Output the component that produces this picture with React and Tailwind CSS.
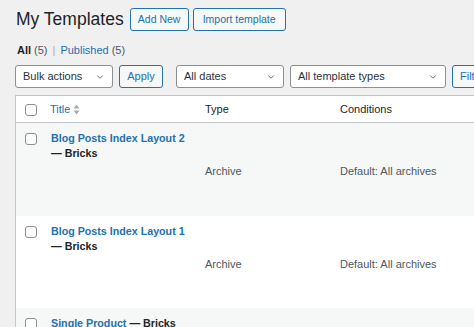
import { ChevronDown } from "lucide-react";

const rows = [
  { title: "Blog Posts Index Layout 2", bricksBelow: true, type: "Archive", cond: "Default: All archives", bg: "bg-[#f6f7f7]", h: "h-[93px]" },
  { title: "Blog Posts Index Layout 1", bricksBelow: true, type: "Archive", cond: "Default: All archives", bg: "bg-white", h: "h-[92px]" },
  { title: "Single Product", bricksBelow: false, type: "Single", cond: "Default: All products", bg: "bg-[#f6f7f7]", h: "h-[92px]" },
];

function Checkbox() {
  return <div className="w-[12px] h-[12px] rounded-[3px] border border-[#8c8f94] bg-white" />;
}

function Select({ label, width }) {
  return (
    <div className={`relative shrink-0 h-[23px] ${width} flex items-center bg-white border border-[#8c8f94] rounded-[3px] pl-[7px] text-[11px] text-[#2c3338]`}>
      {label}
      <ChevronDown size={10} strokeWidth={2} className="absolute right-[7px] top-1/2 -translate-y-1/2 text-[#50575e]" />
    </div>
  );
}

function SortIcon() {
  return (
    <svg width="7" height="11" viewBox="0 0 7 11" className="ml-[3px]">
      <path d="M3.5 0.5 L6.5 4.5 H0.5 Z" fill="#a7aaad" />
      <path d="M3.5 10.5 L6.5 6.5 H0.5 Z" fill="#a7aaad" />
    </svg>
  );
}

export default function App() {
  return (
    <div className="w-[474px] h-[327px] overflow-hidden bg-[#f0f0f1] font-['Liberation_Sans',Arial,sans-serif] text-[#1d2327]">
      {/* Heading */}
      <div className="flex items-center pl-[16px] pt-[8px] h-[31px]">
        <h1 className="text-[17.5px] leading-none text-[#1d2327] mr-[6px] whitespace-nowrap">My Templates</h1>
        <button className="shrink-0 h-[23px] w-[59px] border border-[#2271b1] rounded-[3px] bg-[#f6f7f7] text-[#2271b1] text-[10.5px] whitespace-nowrap">
          Add New
        </button>
        <button className="shrink-0 ml-[4px] h-[23px] w-[93px] border border-[#2271b1] rounded-[3px] bg-[#f6f7f7] text-[#2271b1] text-[10.5px] whitespace-nowrap">
          Import template
        </button>
      </div>

      {/* Status links */}
      <div className="pl-[17px] mt-[13px] h-[12px] flex items-center text-[11px] text-[#50575e] whitespace-nowrap">
        <span className="font-bold text-[#1d2327]">All</span>
        <span className="ml-[3px]">(5)</span>
        <span className="mx-[5px] text-[#a7aaad]">|</span>
        <span className="text-[#2271b1]">Published</span>
        <span className="ml-[3px]">(5)</span>
      </div>

      {/* Filters */}
      <div className="flex items-center pl-[15px] mt-[9px] whitespace-nowrap">
        <Select label="Bulk actions" width="w-[98px]" />
        <button className="shrink-0 ml-[6px] h-[23px] w-[44px] border border-[#2271b1] rounded-[3px] bg-[#f6f7f7] text-[#2271b1] text-[11px]">
          Apply
        </button>
        <div className="shrink-0 ml-[13px]">
          <Select label="All dates" width="w-[108px]" />
        </div>
        <div className="shrink-0 ml-[6px]">
          <Select label="All template types" width="w-[156px]" />
        </div>
        <button className="ml-[6px] h-[23px] w-[44px] shrink-0 border border-[#2271b1] rounded-[3px] bg-[#f6f7f7] text-[#2271b1] text-[11px] text-left pl-[7px]">
          Filter
        </button>
      </div>

      {/* Table */}
      <div className="ml-[15px] mt-[7px] w-[520px] border border-[#c3c4c7] bg-white">
        <div className="grid grid-cols-[34px_155px_135px_1fr] h-[27px] items-center border-b border-[#c3c4c7] text-[11px]">
          <div className="pl-[9px] pt-[2px]"><Checkbox /></div>
          <div className="flex items-center text-[#2271b1]">Title<SortIcon /></div>
          <div>Type</div>
          <div>Conditions</div>
        </div>
        {rows.map((r) => (
          <div key={r.title} className={`grid grid-cols-[34px_155px_135px_1fr] ${r.h} ${r.bg} text-[11px]`}>
            <div className="pl-[9px] pt-[10px]"><Checkbox /></div>
            <div className="pt-[8px] leading-[15px] pl-[1px]">
              <div className="font-bold text-[10.7px] text-[#2271b1] whitespace-nowrap">
                {r.title}
                {!r.bricksBelow && <span className="text-[#1d2327]"> — Bricks</span>}
              </div>
              {r.bricksBelow && <div className="font-bold text-[10.7px] text-[#1d2327]">— Bricks</div>}
            </div>
            <div className="pt-[40px] text-[#50575e]">{r.bricksBelow ? r.type : ""}</div>
            <div className="pt-[40px] text-[#50575e] whitespace-nowrap">{r.bricksBelow ? r.cond : ""}</div>
          </div>
        ))}
      </div>
    </div>
  );
}
